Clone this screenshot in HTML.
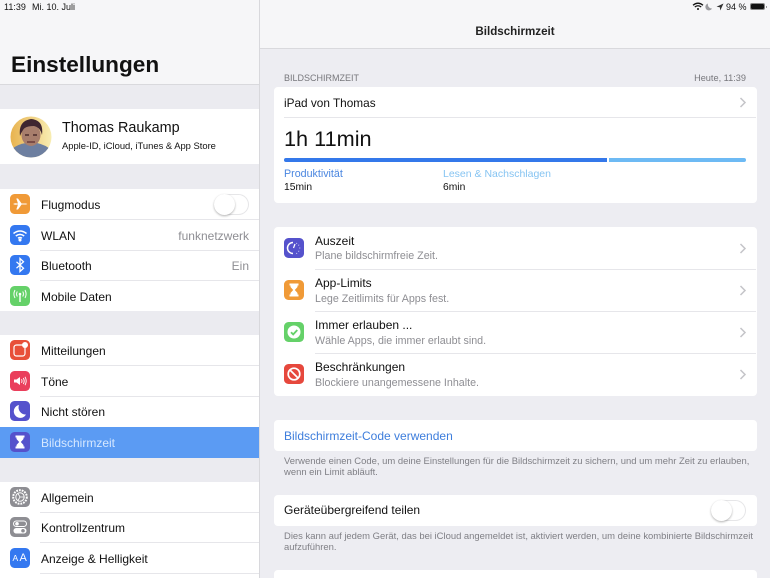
<!DOCTYPE html>
<html lang="de"><head><meta charset="utf-8"><title>Bildschirmzeit</title>
<style>
html,body{margin:0;padding:0;width:770px;height:578px;overflow:hidden}
body{position:relative;background:#ededf2;font-family:"Liberation Sans",sans-serif;color:#111}
div,span.a,svg.a{position:absolute}
.t{white-space:nowrap;line-height:16px;height:16px}
.w{background:#fff}
.l{background:#e6e6ea;height:1px}
.r{font-size:12px;margin-top:1px}
.g{color:#8e8e93}
.s{font-size:10.7px;color:#8e8e93;margin-top:1px}
.f{font-size:9.45px;color:#7f7f85;line-height:10.6px;white-space:nowrap}
.ic{width:20px;height:20px;border-radius:4.5px;overflow:hidden}
.ic svg{position:absolute;left:0;top:0;width:20px;height:20px}
.sw{width:35px;height:21px;border-radius:11px;background:#fff;box-shadow:inset 0 0 0 1px #e6e6e8}
.sw i{position:absolute;left:0;top:0;width:21px;height:21px;border-radius:50%;background:#fff;box-shadow:0 1px 2px rgba(0,0,0,.3)}
</style></head><body>

<!-- sidebar -->
<div style="left:0;top:0;width:259px;height:578px;background:#ebebf0"></div>
<div style="left:0;top:0;width:259px;height:84px;background:#f6f6f8;border-bottom:1px solid #d9d9dd"></div>
<div style="left:259px;top:0;width:1px;height:578px;background:#d8d8dc"></div>
<div class="t" style="left:4px;top:-1px;font-size:9px">11:39</div>
<div class="t" style="left:32px;top:-1px;font-size:9px">Mi. 10. Juli</div>
<div class="t" style="left:11px;top:53px;height:24px;line-height:24px;font-size:22.6px;font-weight:bold">Einstellungen</div>

<div class="w" style="left:0;top:109px;width:259px;height:55px"></div>
<svg class="a" style="left:10px;top:116px" width="42" height="42" viewBox="0 0 42 42">
<defs><clipPath id="c"><circle cx="21" cy="21" r="20.5"/></clipPath>
<linearGradient id="bg" x1="0" x2="1" y1="0" y2="0"><stop offset="0" stop-color="#e8b24e"/><stop offset="1" stop-color="#f8eeb4"/></linearGradient></defs>
<g clip-path="url(#c)"><rect width="42" height="42" fill="url(#bg)"/>
<path d="M2 42V33Q8 28 16 27H27Q36 29 41 34V42Z" fill="#6d7fa0"/>
<ellipse cx="21" cy="19" rx="9.5" ry="11" fill="#a87e6c"/>
<path d="M10 20Q8 5 21 3Q34 4 32 19Q30 11 24 10Q15 10 13 14Q11 17 10 20Z" fill="#3f2530"/>
<path d="M15 19h4M23 19h4" stroke="#4a2b2b" stroke-width="1.6"/>
<path d="M17 26h8" stroke="#6a3b3b" stroke-width="1.5"/></g></svg>
<div class="t" style="left:62px;top:120px;font-size:14.4px">Thomas Raukamp</div>
<div class="t" style="left:62px;top:138px;font-size:9.4px">Apple-ID, iCloud, iTunes &amp; App Store</div>

<div class="w" style="left:0;top:189px;width:259px;height:122px"></div>
<div class="l" style="left:40px;top:219px;width:219px"></div>
<div class="l" style="left:40px;top:250px;width:219px"></div>
<div class="l" style="left:40px;top:280px;width:219px"></div>
<div class="ic" style="left:10px;top:194px;background:#f09a37"><svg viewBox="0 0 20 20"><path d="M3 10l2-.8 3 .3L6.3 4.5H8l3.6 5H16q1.5.5 1.5.5t-1.5.5H11.6L8 15.5H6.3L8 10.5l-3 .3z" fill="#fff"/></svg></div>
<div class="t r" style="left:41px;top:196px">Flugmodus</div>
<div class="sw" style="left:214px;top:193.5px"><i></i></div>
<div class="ic" style="left:10px;top:225px;background:#3478f0"><svg viewBox="0 0 20 20" fill="none" stroke="#fff" stroke-width="1.5"><path d="M3.5 8.5Q10 3.5 16.5 8.5M5.8 11Q10 7.8 14.2 11M8 13.2Q10 11.8 12 13.2"/><circle cx="10" cy="15" r=".8" fill="#fff"/></svg></div>
<div class="t r" style="left:41px;top:227px">WLAN</div>
<div class="t r g" style="right:521px;top:227px">funknetzwerk</div>
<div class="ic" style="left:10px;top:255px;background:#3478f0"><svg viewBox="0 0 20 20" fill="none" stroke="#fff" stroke-width="1.3"><path d="M6.5 6.8l7 6.4L10 16.5v-13l3.5 3.3-7 6.4"/></svg></div>
<div class="t r" style="left:41px;top:257px">Bluetooth</div>
<div class="t r g" style="right:521px;top:257px">Ein</div>
<div class="ic" style="left:10px;top:286px;background:#65d169"><svg viewBox="0 0 20 20" fill="none" stroke="#fff" stroke-width="1"><path d="M10 9v7" stroke-width="1.4"/><circle cx="10" cy="8" r="1.3" fill="#fff" stroke="none"/><path d="M7.3 5.500Q5.800 8 7.3 10.500M12.700 5.500Q14.200 8 12.700 10.500M5 4Q2.800 8 5 12M15 4Q17.200 8 15 12"/></svg></div>
<div class="t r" style="left:41px;top:288px">Mobile Daten</div>

<div class="w" style="left:0;top:335px;width:259px;height:92px"></div>
<div class="l" style="left:40px;top:365px;width:219px"></div>
<div class="l" style="left:40px;top:396px;width:219px"></div>
<div class="ic" style="left:10px;top:340px;background:#e8503a"><svg viewBox="0 0 20 20"><rect x="4" y="5" width="11" height="11" rx="2.5" fill="none" stroke="#fff" stroke-width="1.2"/><circle cx="15" cy="5" r="3" fill="#fff"/></svg></div>
<div class="t r" style="left:41px;top:342px">Mitteilungen</div>
<div class="ic" style="left:10px;top:371px;background:#ea3f5c"><svg viewBox="0 0 20 20"><path d="M4 8.5h2.5L10 6v8l-3.500-2.500H4z" fill="#fff"/><path d="M11.500 8.200q1 1.800 0 3.600M13.300 7q1.800 3 0 6M15 5.800q2.400 4.200 0 8.400" fill="none" stroke="#fff" stroke-width=".9"/></svg></div>
<div class="t r" style="left:41px;top:373px">Töne</div>
<div class="ic" style="left:10px;top:401px;background:#5552cc"><svg viewBox="0 0 20 20"><path d="M9 4a6.500 6.500 0 1 0 7 9.500A7 7 0 0 1 9 4z" fill="#fff"/></svg></div>
<div class="t r" style="left:41px;top:403px">Nicht stören</div>
<div style="left:0;top:427px;width:259px;height:30.5px;background:#5b9bf3"></div>
<div class="ic" style="left:10px;top:432px;background:#5552cc"><svg viewBox="0 0 20 20"><path d="M5.500 3.500h9v2h-1v1.500L10.800 10l2.700 3v1.500h1v2h-9v-2h1V13l2.700-3-2.700-3V5.500h-1z" fill="#fff"/></svg></div>
<div class="t r" style="left:41px;top:434px;color:#d6e8ff">Bildschirmzeit</div>

<div class="w" style="left:0;top:482px;width:259px;height:96px"></div>
<div class="l" style="left:40px;top:512px;width:219px"></div>
<div class="l" style="left:40px;top:542px;width:219px"></div>
<div class="l" style="left:40px;top:573px;width:219px"></div>
<div class="ic" style="left:10px;top:487px;background:#8e8e93"><svg viewBox="0 0 20 20" fill="none" stroke="#fff"><circle cx="10" cy="10" r="6.800" stroke-width="2" stroke-dasharray="1.800 1"/><circle cx="10" cy="10" r="4.200" stroke-width="1"/><path d="M10 10l-2-3.500M10 10l4 0M10 10l-2 3.500" stroke-width=".8"/></svg></div>
<div class="t r" style="left:41px;top:489px">Allgemein</div>
<div class="ic" style="left:10px;top:517px;background:#8e8e93"><svg viewBox="0 0 20 20"><rect x="3.500" y="4" width="13" height="5.500" rx="2.750" fill="none" stroke="#fff"/><circle cx="7" cy="6.750" r="1.800" fill="#fff"/><rect x="3.500" y="11" width="13" height="5.500" rx="2.750" fill="#fff"/><circle cx="13" cy="13.750" r="1.800" fill="#8e8e93"/></svg></div>
<div class="t r" style="left:41px;top:519px">Kontrollzentrum</div>
<div class="ic" style="left:10px;top:548px;background:#3478f0"></div>
<div class="t" style="left:12.5px;top:550px;font-size:8.5px;color:#fff;width:7px">A</div>
<div class="t" style="left:19.5px;top:550px;font-size:11px;color:#fff">A</div>
<div class="t r" style="left:41px;top:550px">Anzeige &amp; Helligkeit</div>

<!-- detail nav -->
<div style="left:260px;top:0;width:510px;height:48px;background:#f6f6f8;border-bottom:1px solid #d9d9dd"></div>
<svg class="a" style="left:692px;top:2px" width="12" height="9" viewBox="0 0 12 9" fill="none" stroke="#111" stroke-width="1.3"><path d="M1 3.200Q6-.8 11 3.200M2.800 5Q6 2.500 9.200 5"/><circle cx="6" cy="7" r="1" fill="#111" stroke="none"/></svg>
<svg class="a" style="left:705px;top:3px" width="8" height="8" viewBox="0 0 8 8"><path d="M3 .5a3.500 3.500 0 1 0 4 5A4 4 0 0 1 3 .5z" fill="#9a9a9e"/></svg>
<svg class="a" style="left:716px;top:3px" width="8" height="8" viewBox="0 0 8 8"><path d="M7.500.5L.5 3.700l3.300.5.500 3.300z" fill="#333"/></svg>
<div class="t" style="left:726px;top:-1px;font-size:9px">94 %</div>
<div style="left:750px;top:3px;width:15px;height:7px;border:.5px solid #888;border-radius:2px;box-sizing:border-box"></div>
<div style="left:751px;top:4px;width:12.5px;height:5px;background:#111;border-radius:1px"></div>
<div style="left:765.5px;top:5.5px;width:1px;height:2.5px;background:#999"></div>
<div class="t" style="left:260px;width:510px;text-align:center;top:23.5px;font-size:11.6px;font-weight:bold;color:#222">Bildschirmzeit</div>

<!-- card 1 -->
<div class="t" style="left:284px;top:69.5px;font-size:9px;color:#77777c">BILDSCHIRMZEIT</div>
<div class="t" style="right:24px;top:69.5px;font-size:9.2px;color:#77777c">Heute, 11:39</div>
<div class="w" style="left:274px;top:87px;width:482.5px;height:116px;border-radius:4px"></div>
<div class="t r" style="left:284px;top:94px;font-size:11.8px">iPad von Thomas</div>
<svg class="a" style="left:739px;top:97px" width="8" height="11" viewBox="0 0 8 11" fill="none" stroke="#c4c4c8" stroke-width="1.5"><path d="M1.5 1l4.500 4.500-4.500 4.500"/></svg>
<div class="l" style="left:284px;top:117px;width:472px"></div>
<div class="t" style="left:284px;top:125px;height:28px;line-height:28px;font-size:21.7px">1h 11min</div>
<div style="left:284px;top:158px;width:323px;height:4px;background:#3478ea;border-radius:2px 0 0 2px"></div>
<div style="left:609px;top:158px;width:137px;height:4px;background:#6dbaf4;border-radius:0 2px 2px 0"></div>
<div class="t" style="left:284px;top:166px;font-size:10.7px;color:#4a86e0">Produktivität</div>
<div class="t" style="left:284px;top:180px;font-size:10.3px">15min</div>
<div class="t" style="left:443px;top:166px;font-size:10.5px;color:#86c4f2">Lesen &amp; Nachschlagen</div>
<div class="t" style="left:443px;top:180px;font-size:10.3px">6min</div>

<!-- card 2 -->
<div class="w" style="left:274px;top:227px;width:482.5px;height:169px;border-radius:4px"></div>
<div class="l" style="left:315px;top:269px;width:441px"></div>
<div class="l" style="left:315px;top:311px;width:441px"></div>
<div class="l" style="left:315px;top:353px;width:441px"></div>

<div class="ic" style="left:284px;top:237.5px;background:#5552cc"><svg viewBox="0 0 20 20" fill="none" stroke="#fff"><path d="M9 4.500a5.500 5.500 0 0 0 0 11" stroke-width="1.5"/><path d="M9.500 10L11 6" stroke-width="1.2"/><path d="M12.500 5l.4.6M14.500 7l.6.3M15.500 10h.7M14.500 13l.6.4M12.500 15l.4.600" stroke-width="1"/></svg></div>
<div class="t r" style="left:315px;top:232px">Auszeit</div>
<div class="t s" style="left:315px;top:247px">Plane bildschirmfreie Zeit.</div>

<div class="ic" style="left:284px;top:280px;background:#f09a37"><svg viewBox="0 0 20 20"><path d="M5.500 3.500h9v2h-1v1.500L10.800 10l2.700 3v1.500h1v2h-9v-2h1V13l2.700-3-2.700-3V5.500h-1z" fill="#fff"/></svg></div>
<div class="t r" style="left:315px;top:274px">App-Limits</div>
<div class="t s" style="left:315px;top:290px">Lege Zeitlimits für Apps fest.</div>

<div class="ic" style="left:284px;top:322px;background:#65d169"><svg viewBox="0 0 20 20"><circle cx="10" cy="10" r="6.500" fill="#fff"/><path d="M7 10.200l2.200 2.200L13.300 8" fill="none" stroke="#65d169" stroke-width="1.8"/></svg></div>
<div class="t r" style="left:315px;top:316px">Immer erlauben ...</div>
<div class="t s" style="left:315px;top:332px">Wähle Apps, die immer erlaubt sind.</div>

<div class="ic" style="left:284px;top:364px;background:#e6483d"><svg viewBox="0 0 20 20" fill="none" stroke="#fff" stroke-width="1.7"><circle cx="10" cy="10" r="5.800"/><path d="M6 6l8 8"/></svg></div>
<div class="t r" style="left:315px;top:358px">Beschränkungen</div>
<div class="t s" style="left:315px;top:374px">Blockiere unangemessene Inhalte.</div>

<svg class="a" style="left:739px;top:243px" width="8" height="11" viewBox="0 0 8 11" fill="none" stroke="#c4c4c8" stroke-width="1.5"><path d="M1.5 1l4.500 4.500-4.500 4.500"/></svg>
<svg class="a" style="left:739px;top:285px" width="8" height="11" viewBox="0 0 8 11" fill="none" stroke="#c4c4c8" stroke-width="1.5"><path d="M1.5 1l4.500 4.500-4.500 4.500"/></svg>
<svg class="a" style="left:739px;top:327px" width="8" height="11" viewBox="0 0 8 11" fill="none" stroke="#c4c4c8" stroke-width="1.5"><path d="M1.5 1l4.500 4.500-4.500 4.500"/></svg>
<svg class="a" style="left:739px;top:369px" width="8" height="11" viewBox="0 0 8 11" fill="none" stroke="#c4c4c8" stroke-width="1.5"><path d="M1.5 1l4.500 4.500-4.500 4.500"/></svg>

<!-- card 3 -->
<div class="w" style="left:274px;top:420px;width:482.5px;height:31px;border-radius:4px"></div>
<div class="t r" style="left:284px;top:427px;color:#3d7ddc">Bildschirmzeit-Code verwenden</div>
<div class="f" style="left:284px;top:457px">Verwende einen Code, um deine Einstellungen für die Bildschirmzeit zu sichern, und um mehr Zeit zu erlauben,<br>wenn ein Limit abläuft.</div>

<!-- card 4 -->
<div class="w" style="left:274px;top:495px;width:482.5px;height:30.5px;border-radius:4px"></div>
<div class="t r" style="left:284px;top:501px">Geräteübergreifend teilen</div>
<div class="sw" style="left:711px;top:499.5px"><i></i></div>
<div class="f" style="left:284px;top:532px">Dies kann auf jedem Gerät, das bei iCloud angemeldet ist, aktiviert werden, um deine kombinierte Bildschirmzeit<br>aufzuführen.</div>

<div class="w" style="left:274px;top:570px;width:482.5px;height:8px;border-radius:4px 4px 0 0"></div>
</body></html>
